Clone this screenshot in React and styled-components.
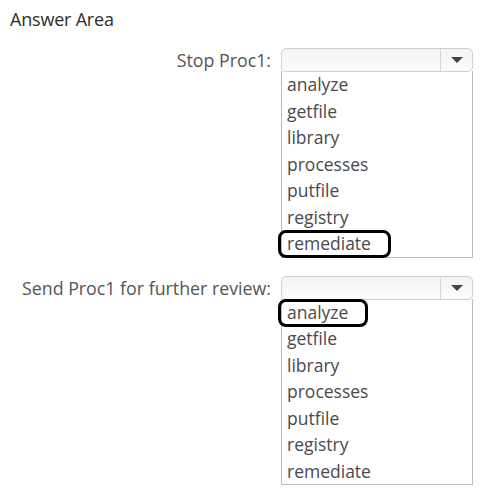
import styled, { createGlobalStyle } from "styled-components";

const GlobalStyle = createGlobalStyle`
  body {
    margin: 0;
    background: #ffffff;
    font-family: "Open Sans", "Noto Sans", sans-serif;
  }
`;

const Page = styled.div`
  width: 484px;
  height: 504px;
  box-sizing: border-box;
  padding: 7px 0 0 10px;
  color: #4a4a4a;
`;

const Title = styled.h3`
  margin: 0;
  font-size: 18px;
  font-weight: 400;
  color: #2e2e2e;
  line-height: 24px;
  letter-spacing: -0.2px;
`;

const Questions = styled.div`
  display: flex;
  flex-direction: column;
  gap: 18px;
  margin-top: 17px;
`;

const Question = styled.div`
  display: grid;
  grid-template-columns: 261px 192px;
  column-gap: 10px;
  align-items: start;
`;

const Label = styled.div`
  text-align: right;
  font-size: 17.8px;
  line-height: 24px;
  color: #555;
  white-space: nowrap;
`;

const Select = styled.div`
  display: flex;
  height: 24px;
  box-sizing: border-box;
  border: 1px solid #d0d0d0;
  border-radius: 5px;
  background: linear-gradient(#f4f4f4, #fcfcfc);
`;

const SelectValue = styled.div`
  flex: 1;
`;

const ArrowButton = styled.div`
  width: 31px;
  display: flex;
  align-items: center;
  justify-content: center;
  border-left: 1px solid #d6d6d6;
`;

const Arrow = styled.span`
  width: 0;
  height: 0;
  border-left: 6px solid transparent;
  border-right: 6px solid transparent;
  border-top: 6px solid #444;
`;

const Options = styled.ul`
  list-style: none;
  margin: 0;
  padding: 0;
  grid-column: 2;
  border: 1px solid #bdbdbd;
  border-top: none;
  margin-top: -1px;
`;

const Option = styled.li`
  height: 26.5px;
  line-height: 26px;
  padding-left: 5px;
  font-size: 17.5px;
  color: #4a4a4a;
`;

const Mark = styled.span`
  position: relative;
  &::after {
    content: "";
    position: absolute;
    top: -1px;
    bottom: -3px;
    left: -9px;
    right: -20px;
    border: 3px solid #000;
    border-radius: 8px;
  }
`;

const choices = [
  "analyze",
  "getfile",
  "library",
  "processes",
  "putfile",
  "registry",
  "remediate",
];

const DropdownQuestion = ({ label, picked }) => (
  <Question>
    <Label>{label}</Label>
    <Select>
      <SelectValue />
      <ArrowButton>
        <Arrow />
      </ArrowButton>
    </Select>
    <Options>
      {choices.map((c) => (
        <Option key={c}>{c === picked ? <Mark>{c}</Mark> : c}</Option>
      ))}
    </Options>
  </Question>
);

const App = () => (
  <>
    <GlobalStyle />
    <Page>
      <Title>Answer Area</Title>
      <Questions>
        <DropdownQuestion label="Stop Proc1:" picked="remediate" />
        <DropdownQuestion
          label="Send Proc1 for further review:"
          picked="analyze"
        />
      </Questions>
    </Page>
  </>
);

export default App;
